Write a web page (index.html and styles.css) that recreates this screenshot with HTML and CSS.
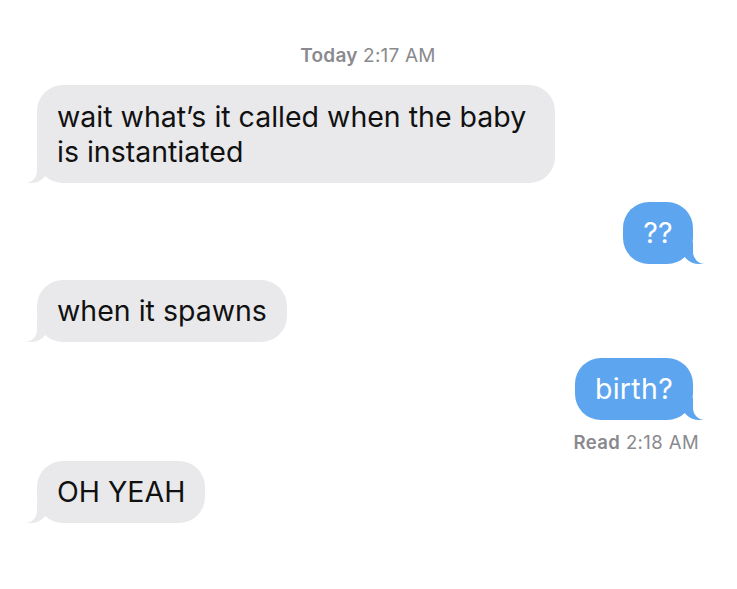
FILE: index.html
```html
<!DOCTYPE html>
<html lang="en">
<head>
  <meta charset="UTF-8">
  <title>Messages</title>
  <link rel="stylesheet" href="styles.css">
</head>
<body>
<div class="chat">
  <div class="stamp"><b>Today</b> 2:17 AM</div>

  <div class="bubble in wide">wait what’s it called when the baby is instantiated</div>
  <div class="bubble out">??</div>
  <div class="bubble in">when it spawns</div>
  <div class="bubble out">birth?</div>
  <div class="read"><b>Read</b> 2:18 AM</div>
  <div class="bubble in">OH YEAH</div>
</div>
</body>
</html>
```

FILE: styles.css
```css
body {
  margin: 0;
  background: #fff;
  font-family: Inter, "Liberation Sans", Arial, sans-serif;
}
.chat {
  display: flex;
  flex-direction: column;
  align-items: flex-start;
  padding: 45px 38px 0 37px;
}
.stamp {
  align-self: center;
  font-size: 19px;
  line-height: 22px;
  color: #8a8a8e;
  letter-spacing: 0.2px;
  margin-bottom: 18px;
}
.stamp b, .read b {
  font-weight: 600;
}
.bubble {
  position: relative;
  box-sizing: border-box;
  max-width: 518px;
  padding: 14px 20px;
  border-radius: 26px;
  font-size: 28.5px;
  line-height: 34px;
  margin-bottom: 16px;
}
.bubble.in {
  background: #e9e9eb;
  color: #111;
}
.bubble.out {
  align-self: flex-end;
  margin-right: 6px;
  background: #5ea5f0;
  color: #fff;
  letter-spacing: 0.3px;
}
.bubble.wide {
  line-height: 35px;
  margin-bottom: 19px;
}
.bubble.in::before,
.bubble.out::before {
  content: "";
  position: absolute;
  bottom: 0;
  width: 24px;
  height: 22px;
}
.bubble.in::after,
.bubble.out::after {
  content: "";
  position: absolute;
  bottom: 0;
  width: 14px;
  height: 22px;
  background: #fff;
}
.bubble.in::before {
  left: -12px;
  background: #e9e9eb;
  border-bottom-right-radius: 18px;
}
.bubble.in::after {
  left: -14px;
  border-bottom-right-radius: 12px;
}
.bubble.out::before {
  right: -12px;
  background: #5ea5f0;
  border-bottom-left-radius: 18px;
}
.bubble.out::after {
  right: -14px;
  border-bottom-left-radius: 12px;
}
.read {
  align-self: flex-end;
  font-size: 18.5px;
  line-height: 20px;
  letter-spacing: 0.4px;
  color: #8a8a8e;
  margin-top: -4px;
  margin-bottom: 9px;
}
```
